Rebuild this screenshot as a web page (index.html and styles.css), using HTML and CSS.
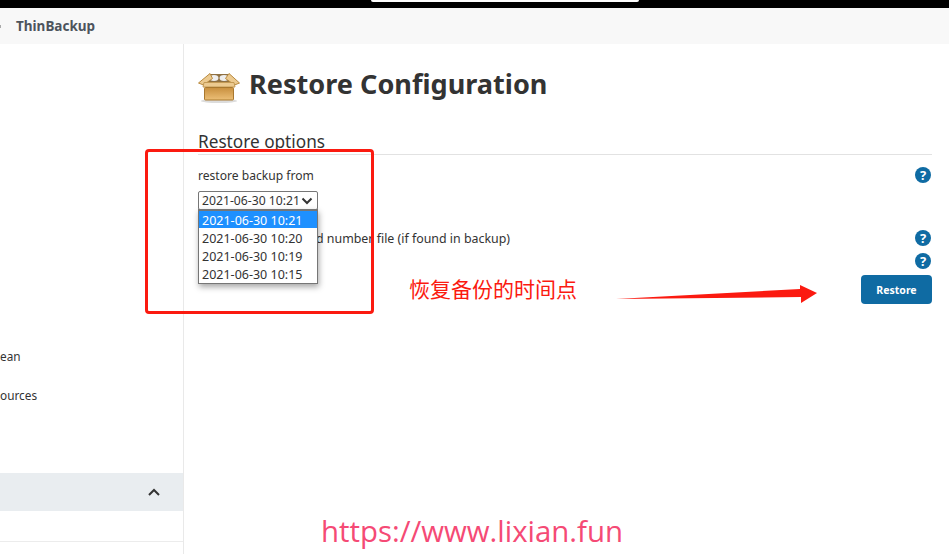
FILE: index.html
```html
<!DOCTYPE html>
<html lang="en">
<head>
    <meta charset="UTF-8">
    <title>ThinBackup - Restore Configuration</title>
    <link rel="stylesheet" href="styles.css">
</head>
<body>
    <div class="topbar"><div class="topbar-notch"></div></div>
    <div class="breadcrumb">
        <span class="crumb-sep"></span>
        <span class="crumb">ThinBackup</span>
    </div>

    <div class="layout">
        <aside class="sidebar">
            <div class="side-link side-link-first">ean</div>
            <div class="side-link">ources</div>
            <div class="side-panel">
                <svg width="14" height="10" viewBox="0 0 14 10"><path d="M2 8l5-5 5 5" fill="none" stroke="#333" stroke-width="2"/></svg>
            </div>
            <div class="side-foot"></div>
        </aside>

        <main class="content">
            <h1 class="page-title">
                <svg class="title-icon" width="44" height="40" viewBox="0 0 44 40">
                    <defs>
                        <linearGradient id="boxBody" x1="0" y1="0" x2="0" y2="1">
                            <stop offset="0" stop-color="#c88f3e"/>
                            <stop offset="1" stop-color="#ecbf77"/>
                        </linearGradient>
                    </defs>
                    <ellipse cx="22" cy="38" rx="18" ry="2" fill="#dcdcdc"/>
                    <path d="M13 11h18l6 9H7z" fill="#8f7042"/>
                    <ellipse cx="17" cy="15" rx="4.500" ry="3" fill="#eeeeee"/>
                    <ellipse cx="27" cy="15" rx="4.500" ry="3" fill="#eeeeee"/>
                    <path d="M13 10.500L1.500 20l5 2 9-6.500zM32 10.500L42.500 20l-5 2-9-6.500z" fill="#ecca90" stroke="#b98a3e"/>
                    <path d="M7 19.500h30l1 4.500H6z" fill="#ecca90" stroke="#c39a55"/>
                    <rect x="7.500" y="24.500" width="29" height="12.500" rx="1" fill="url(#boxBody)" stroke="#a9782f"/>
                </svg>
                Restore Configuration
            </h1>

            <h2 class="section-title">Restore options</h2>

            <div class="form-row row-from">
                <span>restore backup from</span>
                <span class="help">?</span>
            </div>

            <div class="select-wrap">
                <div class="select-box">
                    <span>2021-06-30 10:21</span>
                    <svg width="12" height="8" viewBox="0 0 12 8"><path d="M1.500 1.500L6 6l4.500-4.500" fill="none" stroke="#333" stroke-width="2"/></svg>
                </div>
                <ul class="select-list">
                    <li class="selected">2021-06-30 10:21</li>
                    <li>2021-06-30 10:20</li>
                    <li>2021-06-30 10:19</li>
                    <li>2021-06-30 10:15</li>
                </ul>
            </div>

            <div class="form-row row-build">
                <span class="build-text">d number file (if found in backup)</span>
                <span class="help">?</span>
            </div>
            <div class="form-row row-empty">
                <span class="help">?</span>
            </div>
            <div class="form-actions">
                <button class="restore-btn" type="button">Restore</button>
            </div>
        </main>
    </div>

    <!-- annotations drawn over the screenshot -->
    <div class="note-box"></div>
    <div class="note-text">恢复备份的时间点</div>
    <svg class="note-arrow" width="204" height="20" viewBox="0 0 204 20"><path d="M1 14L185 4 185 0 202 8 186 18 186 12z" fill="#fb1a10"/></svg>
    <div class="watermark">https://www.lixian.fun</div>
</body>
</html>
```

FILE: styles.css
```css
html, body { margin: 0; padding: 0; }
body { width: 949px; height: 554px; overflow: hidden; position: relative; background: #fff; font-family: "Noto Sans", "Open Sans", sans-serif; font-size: 13px; color: #333; }

.topbar { height: 8px; background: #000; display: flex; justify-content: center; }
.topbar-notch { width: 268px; height: 2px; margin-left: 60px; background: #fff; border-radius: 0 0 3px 3px; }

.breadcrumb { height: 36px; background: #f8f8f8; display: flex; align-items: center; padding-left: 16px; }
.crumb { font-size: 13.500px; font-weight: 700; color: #4d545d; }
.crumb-sep { position: absolute; left: -2px; top: 25px; width: 3px; height: 3px; background: #aaa; }

.layout { display: flex; height: 510px; }
.sidebar { width: 183px; border-right: 1px solid #e9e9e9; display: flex; flex-direction: column; overflow: hidden; }
.side-link { height: 39px; font-size: 11.800px; color: #333; line-height: 17px; }
.side-link-first { margin-top: 304px; }
.side-panel { margin-top: 47px; height: 38px; background: #e9edf0; display: flex; align-items: center; justify-content: flex-end; padding-right: 22px; }
.side-foot { height: 30px; border-bottom: 1px solid #ececec; }

.content { flex: 1; padding: 0 17px 0 14px; }
.page-title { margin: 19px 0 0; height: 40px; display: flex; align-items: center; gap: 8px; font-size: 27.100px; font-weight: 700; color: #333; }
.title-icon { margin-left: -1px; }
.section-title { margin: 26px 0 0; height: 25px; line-height: 25px; font-size: 17.200px; font-weight: 400; color: #333; border-bottom: 1px solid #e2e2e2; }

.form-row { display: flex; justify-content: space-between; align-items: center; font-size: 12.100px; }
.row-from { margin-top: 10px; height: 20px; }
.row-build { margin-top: 16px; height: 23px; }
.row-empty { justify-content: flex-end; height: 23px; }
.row-build .help, .row-empty .help { margin-bottom: 2px; }
.build-text { margin-left: 118px; font-size: 12.400px; }
.help { width: 16px; height: 16px; margin-right: 1px; border-radius: 50%; background: #0f6ba3; color: #fff; font-size: 13px; font-weight: 700; line-height: 16px; text-align: center; }

.select-wrap { position: relative; margin-top: 6px; height: 20px; }
.select-box { box-sizing: border-box; width: 120px; height: 19px; border: 1px solid #767676; border-radius: 2px; display: flex; align-items: center; justify-content: space-between; padding: 0 4px 0 3px; font-size: 12.200px; white-space: nowrap; }
.select-list { position: absolute; left: 0; top: 18px; z-index: 2; box-sizing: border-box; width: 120px; margin: 0; padding: 0; list-style: none; background: #fff; border: 1px solid #767676; border-top-width: 2px; box-shadow: 1px 3px 6px rgba(0, 0, 0, 0.35); font-size: 12.500px; }
.select-list li { height: 18px; line-height: 20px; padding-left: 3px; }
.select-list .selected { height: 17px; background: #1e90ff; color: #fff; }
.select-list li:nth-child(2) { margin-top: 1px; }

.form-actions { display: flex; justify-content: flex-end; margin-top: 2px; }
.restore-btn { width: 71px; height: 29px; border: none; border-radius: 4px; background: #0f6ba3; color: #fff; font-family: inherit; font-size: 10.500px; font-weight: 700; }

.note-box { position: absolute; left: 145px; top: 149px; width: 223px; height: 159px; border: 3px solid #fb1a10; border-radius: 4px; }
.note-text { position: absolute; left: 409px; top: 275px; font-family: "Noto Sans CJK SC", sans-serif; font-size: 21px; line-height: 26px; color: #fb1a10; }
.note-arrow { position: absolute; left: 615px; top: 285px; }
.watermark { position: absolute; left: 321px; top: 512px; font-family: "Open Sans", sans-serif; font-size: 29.400px; line-height: 38px; color: #f54a75; }
```
